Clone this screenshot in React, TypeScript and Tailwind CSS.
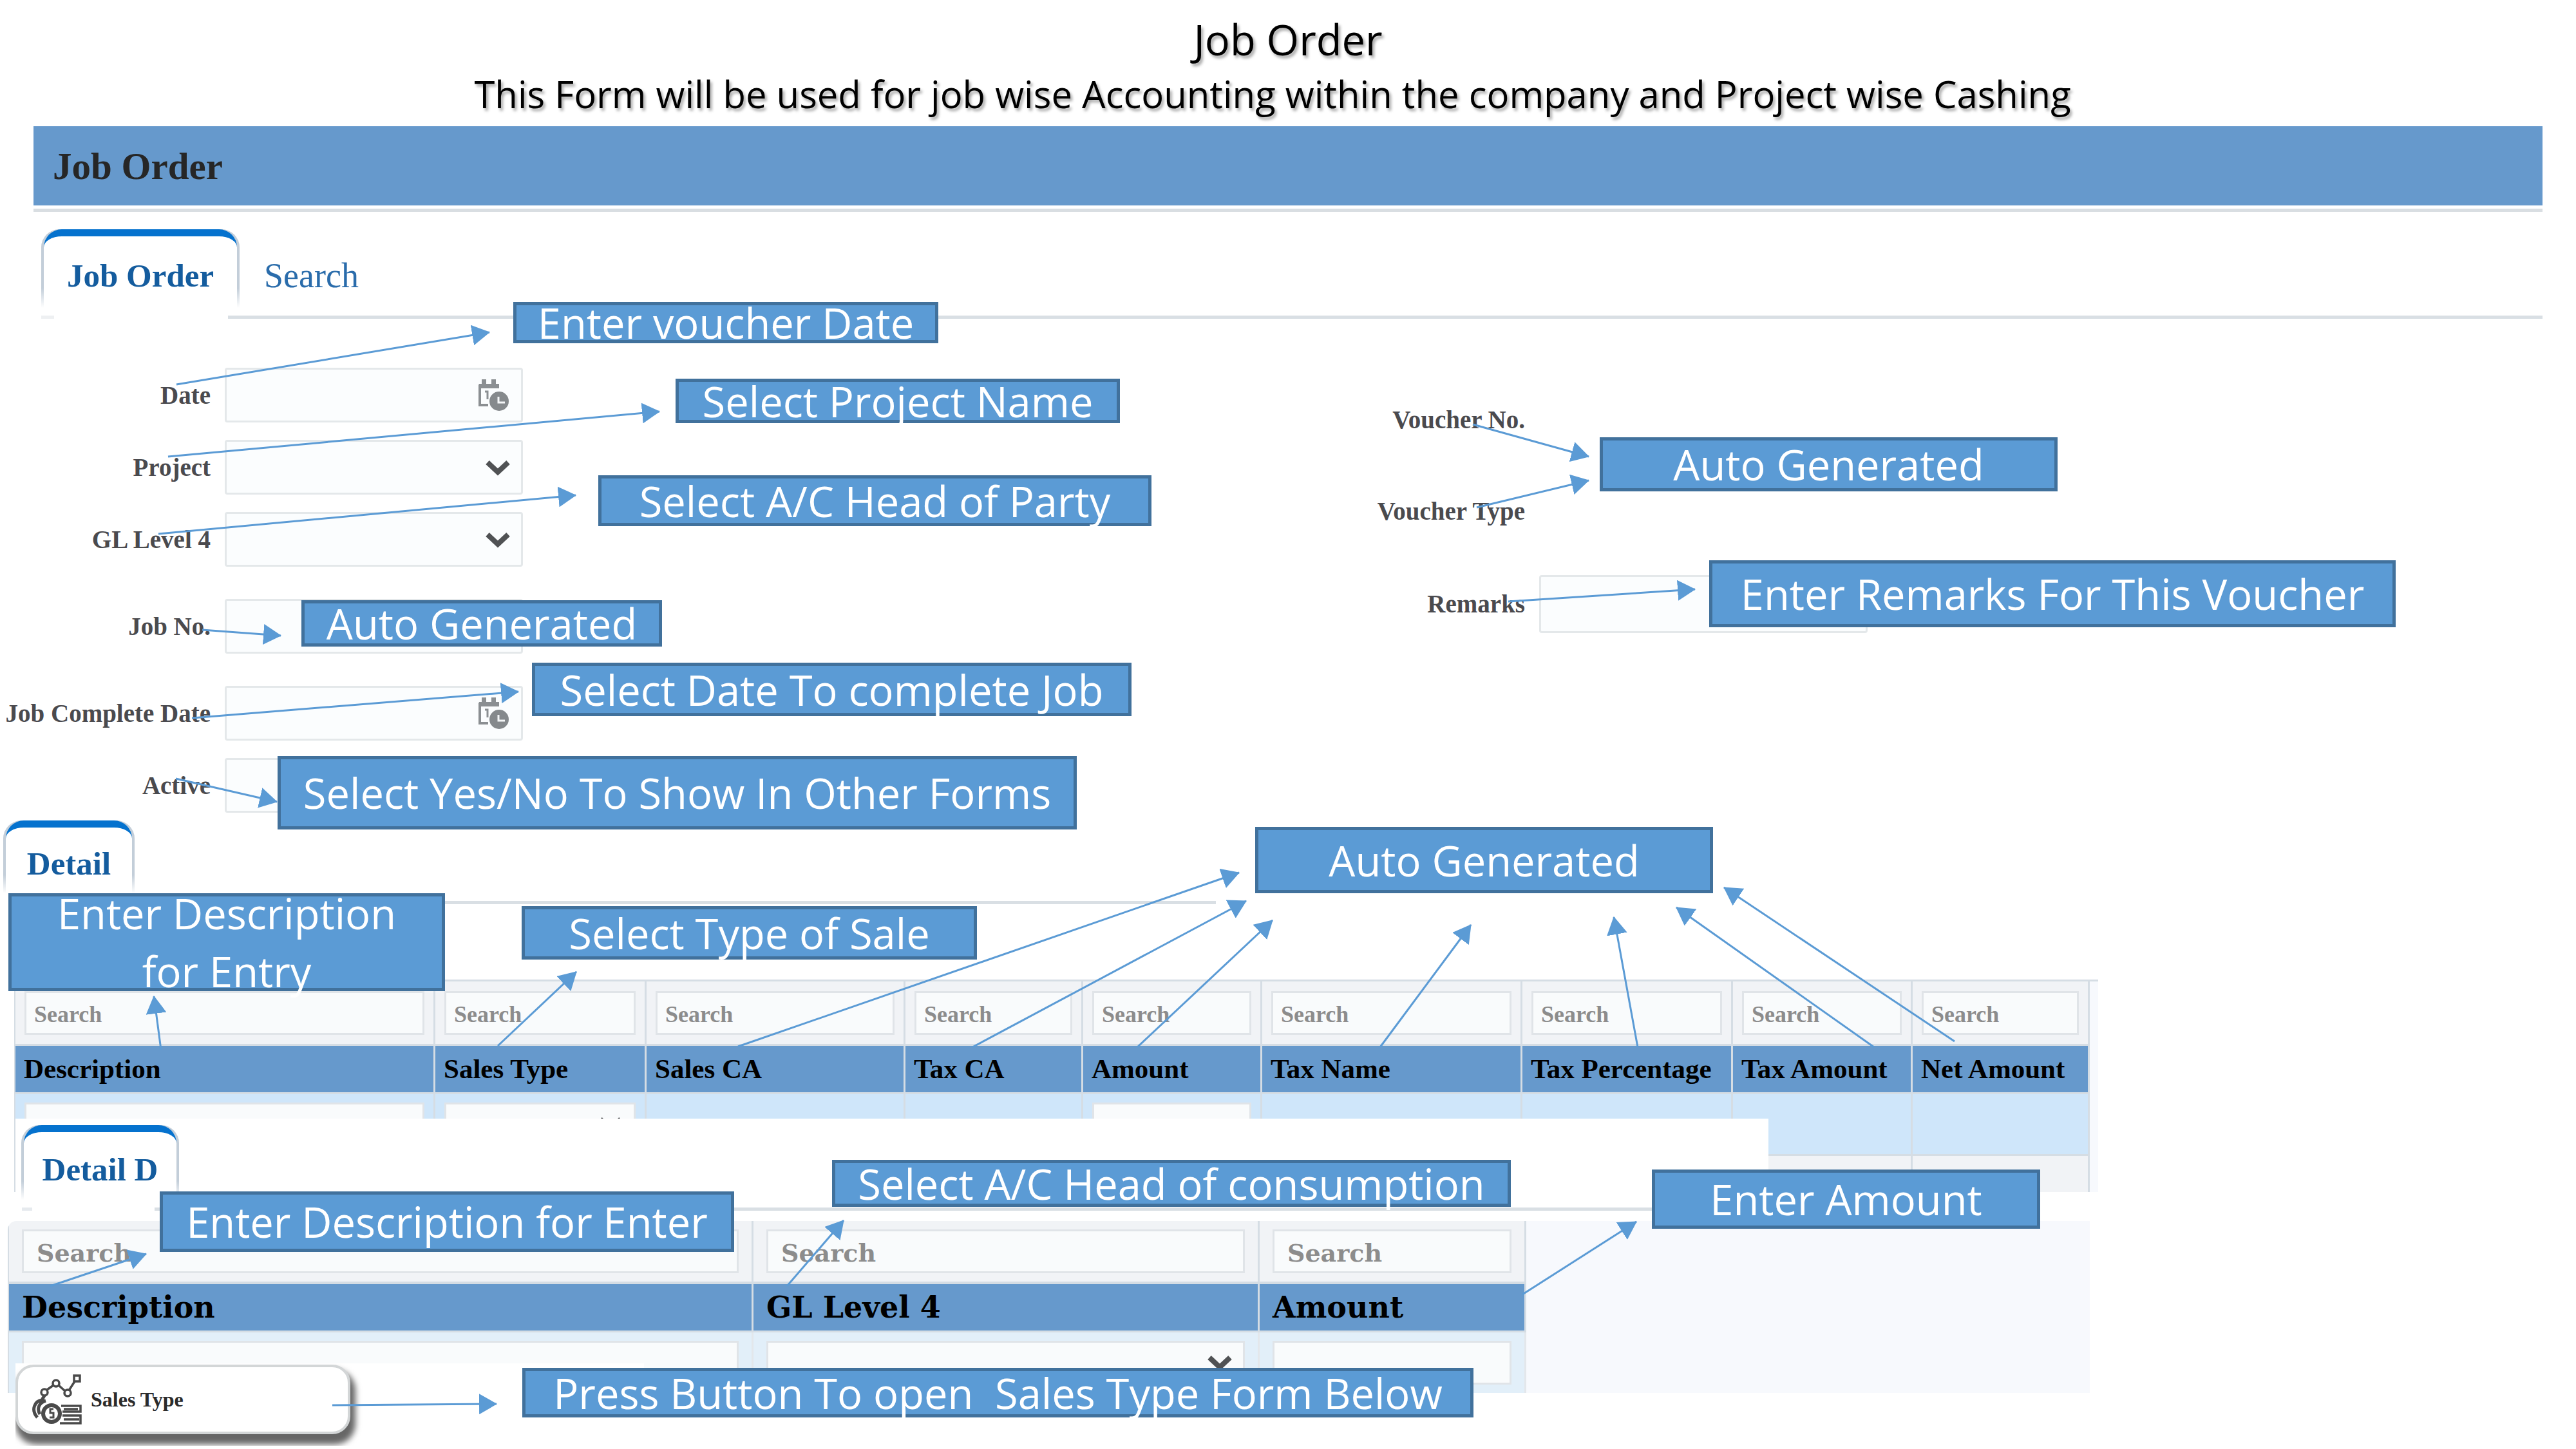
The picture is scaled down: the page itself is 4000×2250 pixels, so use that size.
import React from "react";

const serif = "font-['Liberation_Serif',serif]";
const fieldBox =
  "border-[3px] border-[#e4e8ea] rounded-[4px] bg-[#fbfdfe] text-[39px] text-[#333] outline-none";

type Point = [number, number];

const arrows: { from: Point; to: Point }[] = [
  { from: [274, 597], to: [760, 516] },
  { from: [261, 709], to: [1024, 639] },
  { from: [246, 829], to: [894, 769] },
  { from: [314, 978], to: [436, 987] },
  { from: [298, 1115], to: [805, 1074] },
  { from: [273, 1209], to: [430, 1245] },
  { from: [2287, 659], to: [2467, 709] },
  { from: [2293, 788], to: [2467, 746] },
  { from: [2342, 934], to: [2632, 915] },
  { from: [250, 1630], to: [239, 1547] },
  { from: [773, 1624], to: [895, 1509] },
  { from: [1146, 1625], to: [1924, 1355] },
  { from: [1510, 1626], to: [1935, 1399] },
  { from: [1766, 1626], to: [1976, 1429] },
  { from: [2143, 1626], to: [2284, 1436] },
  { from: [2543, 1626], to: [2506, 1424] },
  { from: [2910, 1626], to: [2603, 1409] },
  { from: [3035, 1617], to: [2677, 1378] },
  { from: [78, 1997], to: [227, 1947] },
  { from: [1222, 1997], to: [1310, 1895] },
  { from: [2364, 2010], to: [2541, 1897] },
  { from: [516, 2182], to: [771, 2180] },
];

function Arrows() {
  return (
    <svg
      className="pointer-events-none absolute top-0 left-0 z-20 h-[2250px] w-[4000px]"
      viewBox="0 0 4000 2250"
      aria-hidden="true"
    >
      <defs>
        <marker
          id="head"
          viewBox="0 0 28 32"
          refX="27"
          refY="16"
          markerWidth="28"
          markerHeight="32"
          markerUnits="userSpaceOnUse"
          orient="auto"
        >
          <path d="M0 0 L28 16 L0 32 Z" fill="#5b9bd5" />
        </marker>
      </defs>
      {arrows.map(({ from, to }) => (
        <line
          key={from.join()}
          x1={from[0]}
          y1={from[1]}
          x2={to[0]}
          y2={to[1]}
          stroke="#5b9bd5"
          strokeWidth="3"
          markerEnd="url(#head)"
        />
      ))}
    </svg>
  );
}

const callouts: { text: string; place: string }[] = [
  { text: "Enter voucher Date", place: "left-[797px] top-[469px] w-[660px] h-[64px]" },
  { text: "Select Project Name", place: "left-[1049px] top-[588px] w-[690px] h-[69px]" },
  { text: "Select A/C Head of Party", place: "left-[929px] top-[738px] w-[859px] h-[79px]" },
  { text: "Auto Generated", place: "left-[468px] top-[932px] w-[560px] h-[72px]" },
  { text: "Select Date To complete Job", place: "left-[826px] top-[1029px] w-[931px] h-[83px]" },
  { text: "Select Yes/No To Show In Other Forms", place: "left-[431px] top-[1174px] w-[1241px] h-[114px]" },
  { text: "Auto Generated", place: "left-[2484px] top-[679px] w-[711px] h-[84px]" },
  { text: "Enter Remarks For This Voucher", place: "left-[2654px] top-[870px] w-[1066px] h-[104px]" },
  { text: "Enter Description for Entry", place: "left-[13px] top-[1387px] w-[678px] h-[152px] px-10" },
  { text: "Select Type of Sale", place: "left-[810px] top-[1407px] w-[707px] h-[83px]" },
  { text: "Auto Generated", place: "left-[1949px] top-[1284px] w-[711px] h-[103px]" },
  { text: "Enter Description for Enter", place: "left-[248px] top-[1850px] w-[892px] h-[94px]" },
  { text: "Select A/C Head of consumption", place: "left-[1292px] top-[1801px] w-[1054px] h-[73px]" },
  { text: "Enter Amount", place: "left-[2565px] top-[1816px] w-[603px] h-[92px]" },
  { text: "Press Button To open  Sales Type Form Below", place: "left-[811px] top-[2124px] w-[1477px] h-[77px]" },
];

function Callouts() {
  return (
    <>
      {callouts.map(({ text, place }) => (
        <div
          key={place}
          className={`absolute z-30 flex items-center justify-center border-[5px] border-[#41719c] bg-[#5b9bd5] text-center text-[65px] leading-[90px] whitespace-pre-wrap text-white ${place}`}
        >
          {text}
        </div>
      ))}
    </>
  );
}

function Chevron() {
  return (
    <svg
      className="pointer-events-none absolute top-1/2 right-5 h-7 w-[38px] -translate-y-1/2"
      viewBox="0 0 38 28"
      fill="none"
      stroke="#505254"
      strokeWidth="8"
      aria-hidden="true"
    >
      <path d="M3 6 L19 21 L35 6" />
    </svg>
  );
}

function CalendarClock() {
  return (
    <svg className="h-[50px] w-[47px]" viewBox="0 0 47 50" fill="none" aria-hidden="true">
      <path d="M2 42 V10 H32 M2 40 H15" stroke="#8b8f92" strokeWidth="4" />
      <path d="M1 7 H32 V14 H1 Z M5 0 H12 V9 H5 Z M20 0 H27 V9 H20 Z" fill="#8b8f92" />
      <path d="M10 19 H14 V31" stroke="#8b8f92" strokeWidth="3" />
      <circle cx="32" cy="34" r="15" fill="#85898c" />
      <path d="M31 27 V36 H41" stroke="#f4f6f7" strokeWidth="3" />
    </svg>
  );
}

function SalesIcon() {
  return (
    <svg className="h-[78px] w-[78px] shrink-0" viewBox="0 0 78 78" fill="none" stroke="#4a4a4a" aria-hidden="true">
      <g strokeWidth="3.5">
        <rect x="66" y="2" width="9" height="9" />
        <circle cx="38" cy="14" r="5" />
        <circle cx="20" cy="28" r="5" />
        <circle cx="56" cy="29" r="5" />
        <path d="M67 11 L58 25 M42 17 L52 26 M34 17 L24 24" />
        <path d="M20 33 L16 40" strokeWidth="5" />
      </g>
      <path d="M17 40 C4 41 -1 56 9 67 M22 41 C11 44 8 54 13 62" strokeWidth="5" />
      <circle cx="31" cy="61" r="13" strokeWidth="6" />
      <path d="M34 54 H29 V60 H34 V67 H28" strokeWidth="3" />
      <path d="M46 49 H76 V58 H48 M50 54 H72 M48 64 H76 V76 H44 M50 58 H76 M50 70 H74" strokeWidth="3.5" />
    </svg>
  );
}

type Kind = "date" | "select" | "text";

function Field({ id, label, kind, gap }: { id: string; label: string; kind: Kind; gap: string }) {
  return (
    <div className={`flex items-center ${gap}`}>
      <label htmlFor={id} className="w-[327px] shrink-0 text-right text-[39px] leading-[44px] font-bold whitespace-nowrap text-[#4a4a4e]">
        {label}
      </label>
      <div className="relative ml-[22px] w-[463px]">
        {kind === "select" ? (
          <>
            <select id={id} className={`h-[85px] w-full appearance-none px-4 ${fieldBox}`} defaultValue="">
              <option value=""></option>
            </select>
            <Chevron />
          </>
        ) : (
          <input id={id} type="text" className={`block h-[85px] w-full px-4 ${fieldBox}`} />
        )}
        {kind === "date" && (
          <button type="button" aria-label={`Pick ${label}`} className="absolute top-1/2 right-[22px] -translate-y-1/2">
            <CalendarClock />
          </button>
        )}
      </div>
    </div>
  );
}

function ActiveTab({ children, size }: { children: string; size: string }) {
  return (
    <div className={`rounded-t-[28px] bg-gradient-to-b from-[#c3ced9] from-75% to-white px-1 ${size}`}>
      <button
        type="button"
        role="tab"
        aria-selected="true"
        className="h-full w-full rounded-t-[28px] border-t-[11px] border-[#0572ce] bg-white pt-[10px] text-[51px] leading-[60px] font-bold whitespace-nowrap text-[#145c9e]"
      >
        {children}
      </button>
    </div>
  );
}

const detailColumns: { name: string; width: string; editor?: "text" | "select" }[] = [
  { name: "Description", width: "w-[652px]", editor: "text" },
  { name: "Sales Type", width: "w-[328px]", editor: "select" },
  { name: "Sales CA", width: "w-[402px]" },
  { name: "Tax CA", width: "w-[276px]" },
  { name: "Amount", width: "w-[278px]", editor: "text" },
  { name: "Tax Name", width: "w-[404px]" },
  { name: "Tax Percentage", width: "w-[327px]" },
  { name: "Tax Amount", width: "w-[279px]" },
  { name: "Net Amount", width: "w-[275px]" },
];

const consumptionColumns: { name: string; width: string; editor: "text" | "select" }[] = [
  { name: "Description", width: "w-[1156px]", editor: "text" },
  { name: "GL Level 4", width: "w-[786px]", editor: "select" },
  { name: "Amount", width: "w-[414px]", editor: "text" },
];

const cellInput = "block h-[68px] w-full border-[3px] border-[#e0e4e8] bg-[#f9fbfc] outline-none placeholder:text-[#8c8c8c] placeholder:opacity-100";

function CellEditor({ kind, label }: { kind: "text" | "select"; label: string }) {
  if (kind === "text") {
    return <input type="text" aria-label={label} className={cellInput} />;
  }
  return (
    <div className="relative">
      <select aria-label={label} className={`appearance-none ${cellInput}`} defaultValue="">
        <option value=""></option>
      </select>
      <Chevron />
    </div>
  );
}

function DetailTable() {
  return (
    <div className="mt-[117px] ml-[22px] h-[330px] w-[3236px] overflow-hidden border-t-[3px] border-[#d5dde4] bg-[#f7f9fd]">
      <table className="w-[3223px] table-fixed border-separate border-spacing-0 border-l-2 border-[#d5dde4] text-left">
        <thead>
          <tr className="h-[100px] bg-[#f1f3f6]">
            {detailColumns.map(({ name, width }) => (
              <td key={name} className={`border-r-[3px] border-b-[3px] border-[#d5dde4] px-[14px] ${width}`}>
                <input
                  type="text"
                  placeholder="Search"
                  aria-label={`Search ${name}`}
                  className={`px-[12px] pt-1 text-[36px] font-bold ${cellInput}`}
                />
              </td>
            ))}
          </tr>
          <tr className="h-[75px] bg-[#6699cc]">
            {detailColumns.map(({ name }) => (
              <th key={name} scope="col" className="border-r-[3px] border-b-[3px] border-[#d5dde4] pl-[13px] text-[43px] leading-[50px] font-bold whitespace-nowrap text-black">
                {name}
              </th>
            ))}
          </tr>
        </thead>
        <tbody>
          <tr className="h-[96px] bg-[#cfe6fa]">
            {detailColumns.map(({ name, editor }) => (
              <td key={name} className="border-r-[3px] border-b-[3px] border-[#d5dde4] px-[14px]">
                {editor && <CellEditor kind={editor} label={name} />}
              </td>
            ))}
          </tr>
          <tr className="h-[75px] bg-[#f1f3f6]">
            {detailColumns.map(({ name }) => (
              <td key={name} className="border-r-[3px] border-[#d5dde4]" />
            ))}
          </tr>
        </tbody>
      </table>
    </div>
  );
}

function ConsumptionTable() {
  return (
    <div className="relative z-10 ml-3 h-[267px] w-[3233px] overflow-hidden rounded-tl-[14px] bg-[#f7f9fd] font-['DejaVu_Serif',serif]">
      <table className="w-[2358px] table-fixed border-separate border-spacing-0 border-l-2 border-[#d5dde4] text-left">
        <thead>
          <tr className="h-[98px] bg-[#f1f3f6]">
            {consumptionColumns.map(({ name, width }) => (
              <td key={name} className={`border-r-[3px] border-b-[4px] border-[#d5dde4] px-5 ${width}`}>
                <input
                  type="text"
                  placeholder="Search"
                  aria-label={`Search ${name}`}
                  className={`px-5 pt-1 text-[38px] font-bold ${cellInput}`}
                />
              </td>
            ))}
          </tr>
          <tr className="h-[75px] bg-[#6699cc]">
            {consumptionColumns.map(({ name }) => (
              <th key={name} scope="col" className="border-r-[3px] border-b-[3px] border-[#d5dde4] pl-5 text-[46px] leading-[50px] font-bold whitespace-nowrap text-black">
                {name}
              </th>
            ))}
          </tr>
        </thead>
        <tbody>
          <tr className="h-[94px] bg-[#e2eff9]">
            {consumptionColumns.map(({ name, editor }) => (
              <td key={name} className="border-r-[3px] border-[#e3e7eb] px-5">
                <CellEditor kind={editor} label={name} />
              </td>
            ))}
          </tr>
        </tbody>
      </table>
    </div>
  );
}

export default function App() {
  return (
    <main className="relative min-h-screen w-full overflow-hidden bg-white font-['Open_Sans',sans-serif]">
      <header className="pt-4 pb-[10px] text-center text-black [text-shadow:3px_4px_4px_rgba(0,0,0,0.35)]">
        <h1 className="text-[65px] leading-[90px]">Job Order</h1>
        <p className="pr-12 text-[58px] leading-[80px]">
          This Form will be used for job wise Accounting within the company and Project wise Cashing
        </p>
      </header>

      <div className={serif}>
        <div className="mx-[52px]">
          <h2 className="flex h-[123px] items-center bg-[#6699cc] pl-[30px] text-[59px] leading-[70px] font-bold text-[#262626]">
            Job Order
          </h2>
          <div className="mt-[5px] h-[5px] bg-[#d9dee2]" />
          <div role="tablist" className="mt-[27px] ml-3 flex h-[122px]">
            <ActiveTab size="w-[308px] h-[122px]">Job Order</ActiveTab>
            <button type="button" role="tab" aria-selected="false" className="ml-[38px] pt-[21px] text-[54px] leading-[60px] text-[#2a6cab]">
              Search
            </button>
          </div>
          <div className="mt-3 flex h-[5px] justify-between">
            <div className="ml-3 w-5 bg-[#eef0f2]" />
            <div className="ml-[270px] grow bg-[#d9dfe4]" />
          </div>
        </div>

        <form className="grid grid-cols-[812px_1fr] pt-[76px]">
          <div>
            <Field id="date" label="Date" kind="date" gap="" />
            <Field id="project" label="Project" kind="select" gap="mt-[27px]" />
            <Field id="gl" label="GL Level 4" kind="select" gap="mt-[27px]" />
            <Field id="jobno" label="Job No." kind="text" gap="mt-[50px]" />
            <Field id="complete" label="Job Complete Date" kind="date" gap="mt-[50px]" />
            <Field id="active" label="Active" kind="text" gap="mt-[27px]" />
          </div>
          <div className="flex flex-col gap-[57px] pt-[38px] text-[39px] leading-[44px] font-bold text-[#4a4a4e]">
            <div className="flex h-[85px] w-[1556px] items-center justify-end">Voucher No.</div>
            <div className="flex h-[85px] w-[1556px] items-center justify-end">Voucher Type</div>
            <div className="flex items-center">
              <label htmlFor="remarks" className="w-[1556px] text-right">
                Remarks
              </label>
              <input id="remarks" type="text" className={`ml-[22px] h-[90px] w-[510px] px-4 ${fieldBox}`} />
            </div>
          </div>
        </form>

        <section>
          <div role="tablist" className="mt-3 ml-[5px]">
            <ActiveTab size="w-[204px] h-[113px]">Detail</ActiveTab>
          </div>
          <div className="mt-3 ml-[200px] h-[5px] w-[1688px] bg-[#d9dfe4]" />
          <DetailTable />
        </section>

        <section>
          <div className="relative z-10 -mt-[114px] ml-6 w-[2722px] bg-white pt-[10px] pb-4">
            <div role="tablist" className="ml-[9px]">
              <ActiveTab size="w-[245px] h-[116px]">Detail D</ActiveTab>
            </div>
            <div className="mt-3 flex h-[5px]">
              <div className="ml-[10px] w-4 bg-[#e6eaee]" />
              <div className="ml-[190px] grow bg-[#d9dfe4]" />
            </div>
          </div>
          <ConsumptionTable />
        </section>

        <div className="relative z-10 -mt-[46px] ml-6 w-[976px] overflow-hidden bg-white pt-[2px] pb-[18px]">
          <button
            type="button"
            className="flex h-[108px] w-[520px] items-center gap-[14px] rounded-[28px] border-[4px] border-[#d3d6d7] bg-white pl-[21px] text-[32px] leading-[40px] font-bold text-[#2b2b2b] shadow-[4px_12px_10px_4px_rgba(0,0,0,0.6)]"
          >
            <SalesIcon />
            Sales Type
          </button>
        </div>
      </div>

      <Arrows />
      <Callouts />
    </main>
  );
}
